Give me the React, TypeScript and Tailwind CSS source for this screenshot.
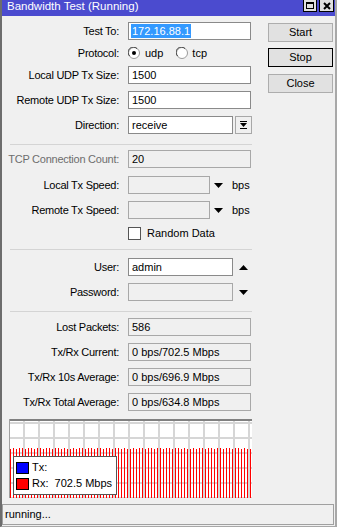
import React from "react"

const font = { fontFamily: '"Liberation Sans", Arial, sans-serif' }

function Label({ text, muted }: { text: string; muted?: boolean }) {
    return (
        <div
            className={`w-[118px] shrink-0 pr-[1px] text-right whitespace-nowrap tracking-[-0.25px] ${muted ? "text-[#6d6d6d]" : "text-black"}`}
        >
            {text}
        </div>
    )
}

function Field({ value, width, white, selected }: { value?: string; width: string; white?: boolean; selected?: boolean }) {
    return (
        <div
            className={`${width} h-[18px] shrink-0 flex items-center pl-[2px] border ${white ? "bg-white border-[#8a8a8a]" : "bg-[#f0f0f0] border-[#a8a8a8]"}`}
        >
            {selected ? (
                <span className="bg-[#3399ff] text-white px-[1px] leading-[14px]">{value}</span>
            ) : (
                <span className="px-[1px]">{value}</span>
            )}
        </div>
    )
}

function TriDown() {
    return (
        <svg width="9" height="5" viewBox="0 0 9 5" className="shrink-0">
            <path d="M0 0h9L4.5 5z" fill="#000" />
        </svg>
    )
}

function TriUp() {
    return (
        <svg width="9" height="5" viewBox="0 0 9 5" className="shrink-0">
            <path d="M0 5h9L4.5 0z" fill="#000" />
        </svg>
    )
}

function Radio({ checked }: { checked?: boolean }) {
    return (
        <svg width="12" height="12" viewBox="0 0 12 12" className="shrink-0">
            <circle cx="6" cy="6" r="5.5" fill="#fff" stroke="#9a9a9a" />
            <path d="M1.6 9A5 5 0 0 1 9 1.6" fill="none" stroke="#404040" strokeWidth="1" />
            {checked && <circle cx="6" cy="6" r="2" fill="#000" />}
        </svg>
    )
}

function Row({ mt, children }: { mt: string; children: React.ReactNode }) {
    return <div className={`${mt} flex h-[18px] items-center gap-[8px]`}>{children}</div>
}

function Separator({ mt }: { mt: string }) {
    return <div className={`${mt} ml-[8px] w-[242px] h-px bg-[#d4d4d4]`} />
}

function Graph() {
    const bars = Array.from({ length: 81 }, (_, k) => {
        const top = (k * 7 + (k % 4)) % 5 < 2 ? 30 : 29
        return { x: 1 + 3 * k, top }
    })
    const vlines = Array.from({ length: 16 }, (_, k) => 14 + 15 * k)
    const hlines = Array.from({ length: 6 }, (_, k) => 3 + 15 * k)
    return (
        <div className="relative mt-[8px] ml-[7px] w-[243px] h-[79px]">
            <svg width="243" height="79" viewBox="0 0 243 79" className="block">
                <rect width="243" height="79" fill="#fff" />
                {vlines.map((x) => (
                    <rect key={"v" + x} x={x} y="0" width="2" height="79" fill="#d6d6d6" />
                ))}
                {hlines.map((y) => (
                    <rect key={"h" + y} x="0" y={y} width="243" height="2" fill="#d6d6d6" />
                ))}
                {bars.map((b) => (
                    <rect key={b.x} x={b.x} y={b.top} width="1" height={79 - b.top} fill="#ff0000" />
                ))}
                <rect x="0" y="0" width="243" height="2" fill="#808080" />
                <rect x="0" y="0" width="1" height="79" fill="#a0a0a0" />
            </svg>
            <div className="absolute left-[4px] top-[37px] w-[104px] h-[39px] bg-white border border-[#555] flex flex-col justify-center gap-[4px] pl-[2px]">
                <div className="flex items-center gap-[3px] h-[12px]">
                    <div className="w-[13px] h-[12px] bg-[#0000ff] border border-black" />
                    <span>Tx:</span>
                </div>
                <div className="flex items-center gap-[3px] h-[12px]">
                    <div className="w-[13px] h-[12px] bg-[#ff0000] border border-black" />
                    <span className="whitespace-pre">Rx:  702.5 Mbps</span>
                </div>
            </div>
        </div>
    )
}

function Button({ text, primary, mt }: { text: string; primary?: boolean; mt: string }) {
    return (
        <div
            className={`${mt} h-[19px] w-[65px] flex items-center justify-center bg-[#e1e1e1] border ${primary ? "border-black" : "border-[#adadad]"}`}
        >
            {text}
        </div>
    )
}

export default function App() {
    return (
        <div
            className="w-[337px] h-[527px] bg-[#f0f0f0] flex flex-col overflow-hidden text-[11px] text-black border-l-2 border-l-[#6d6d6d] border-r-2 border-r-[#a8a8a8] border-b border-b-[#a8a8a8]"
            style={font}
        >
            {/* title bar */}
            <div className="h-[16px] -ml-[2px] -mr-[2px] bg-[#4b4bcf] flex items-start justify-between pl-[7px] pr-[3px]">
                <span className="text-white text-[11.5px] leading-[12px]">Bandwidth Test (Running)</span>
                <div className="flex gap-[2px]">
                    <div className="w-[14px] h-[12px] bg-[#e0e0e0] border border-black border-t-0 flex items-center justify-center">
                        <div className="w-[8px] h-[7px] border border-black border-t-2" />
                    </div>
                    <div className="w-[15px] h-[12px] bg-[#e0e0e0] border border-black border-t-0 flex items-center justify-center">
                        <svg width="8" height="8" viewBox="0 0 8 8">
                            <path d="M1 1L7 7M7 1L1 7" stroke="#000" strokeWidth="2" />
                        </svg>
                    </div>
                </div>
            </div>

            <div className="flex">
                {/* form */}
                <div className="w-[258px] shrink-0 flex flex-col">
                    <Row mt="mt-[6px]">
                        <Label text="Test To:" />
                        <Field value="172.16.88.1" width="w-[123px]" white selected />
                    </Row>
                    <Row mt="mt-[4px]">
                        <Label text="Protocol:" />
                        <div className="flex items-center">
                            <Radio checked />
                            <span className="ml-[5px]">udp</span>
                            <span className="ml-[13px]"><Radio /></span>
                            <span className="ml-[4px]">tcp</span>
                        </div>
                    </Row>
                    <Row mt="mt-[4px]">
                        <Label text="Local UDP Tx Size:" />
                        <Field value="1500" width="w-[123px]" white />
                    </Row>
                    <Row mt="mt-[7px]">
                        <Label text="Remote UDP Tx Size:" />
                        <Field value="1500" width="w-[123px]" white />
                    </Row>
                    <Row mt="mt-[7px]">
                        <Label text="Direction:" />
                        <div className="flex gap-[2px]">
                            <Field value="receive" width="w-[105px]" white />
                            <div className="w-[17px] h-[18px] bg-[#f0f0f0] border border-[#a8a8a8] flex flex-col items-center justify-center gap-[1px]">
                                <div className="w-[7px] h-px bg-black" />
                                <svg width="7" height="4" viewBox="0 0 7 4">
                                    <path d="M0 0h7L3.5 4z" fill="#000" />
                                </svg>
                                <div className="w-[7px] h-px bg-black" />
                            </div>
                        </div>
                    </Row>

                    <Separator mt="mt-[10px]" />

                    <Row mt="mt-[5px]">
                        <Label text="TCP Connection Count:" muted />
                        <Field value="20" width="w-[123px]" />
                    </Row>
                    <Row mt="mt-[8px]">
                        <Label text="Local Tx Speed:" />
                        <Field width="w-[82px]" />
                        <div className="-ml-[4px] flex items-center">
                            <TriDown />
                            <span className="ml-[9px]">bps</span>
                        </div>
                    </Row>
                    <Row mt="mt-[7px]">
                        <Label text="Remote Tx Speed:" />
                        <Field width="w-[82px]" />
                        <div className="-ml-[4px] flex items-center">
                            <TriDown />
                            <span className="ml-[9px]">bps</span>
                        </div>
                    </Row>
                    <Row mt="mt-[5px]">
                        <div className="w-[118px] shrink-0" />
                        <div className="flex items-center">
                            <div className="w-[13px] h-[13px] bg-white border border-[#555]" />
                            <span className="ml-[6px]">Random Data</span>
                        </div>
                    </Row>

                    <Separator mt="mt-[7px]" />

                    <Row mt="mt-[8px]">
                        <Label text="User:" />
                        <Field value="admin" width="w-[105px]" white />
                        <div className="-ml-[2px]"><TriUp /></div>
                    </Row>
                    <Row mt="mt-[7px]">
                        <Label text="Password:" />
                        <Field width="w-[105px]" />
                        <div className="-ml-[2px]"><TriDown /></div>
                    </Row>

                    <Separator mt="mt-[10px]" />

                    <Row mt="mt-[6px]">
                        <Label text="Lost Packets:" />
                        <Field value="586" width="w-[123px]" />
                    </Row>
                    <Row mt="mt-[7px]">
                        <Label text="Tx/Rx Current:" />
                        <Field value="0 bps/702.5 Mbps" width="w-[123px]" />
                    </Row>
                    <Row mt="mt-[7px]">
                        <Label text="Tx/Rx 10s Average:" />
                        <Field value="0 bps/696.9 Mbps" width="w-[123px]" />
                    </Row>
                    <Row mt="mt-[7px]">
                        <Label text="Tx/Rx Total Average:" />
                        <Field value="0 bps/634.8 Mbps" width="w-[123px]" />
                    </Row>
                </div>

                {/* buttons */}
                <div className="ml-[8px] flex flex-col">
                    <Button text="Start" mt="mt-[7px]" />
                    <Button text="Stop" primary mt="mt-[6px]" />
                    <Button text="Close" mt="mt-[7px]" />
                </div>
            </div>

            <Graph />

            <div className="mt-[6px] mr-[1px] h-[21px] border border-[#a0a0a0] flex items-center pl-[2px]">
                running...
            </div>
        </div>
    )
}
